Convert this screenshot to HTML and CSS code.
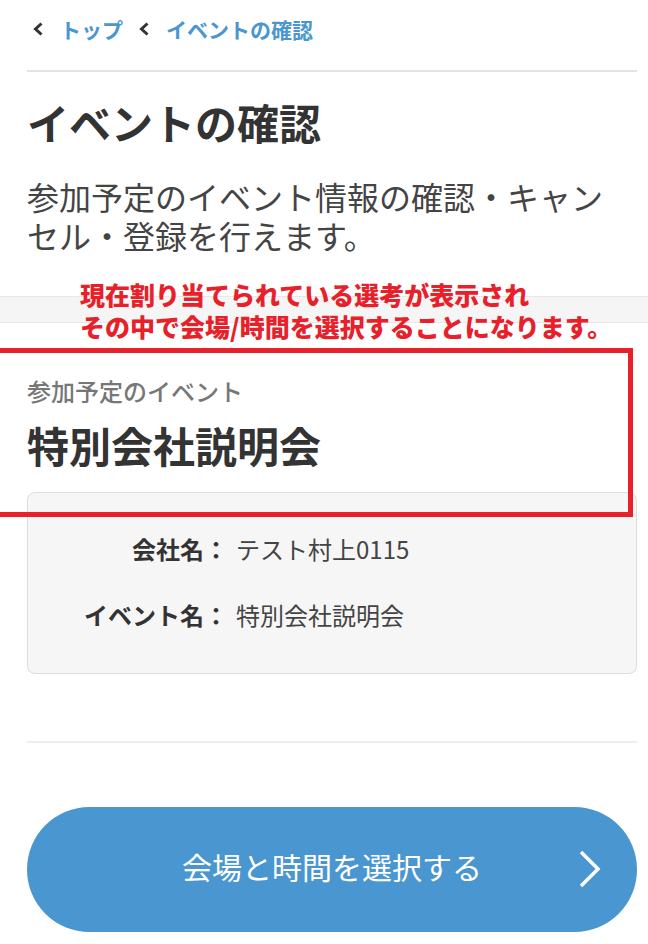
FILE: index.html
```html
<!DOCTYPE html>
<html lang="ja">
<head>
<meta charset="UTF-8">
<meta name="viewport" content="width=device-width, initial-scale=1.0">
<title>イベントの確認</title>
<link rel="stylesheet" href="styles.css">
</head>
<body>

<div class="page">
    <nav class="breadcrumb">
        <span class="crumb">
            <svg class="crumb-arrow" width="11" height="14" viewBox="0 0 11 14"><path d="M8.5 1.5 L2.5 7 L8.5 12.5" fill="none" stroke="#333" stroke-width="3"/></svg>
            <a href="#">トップ</a>
        </span>
        <span class="crumb">
            <svg class="crumb-arrow" width="11" height="14" viewBox="0 0 11 14"><path d="M8.5 1.5 L2.5 7 L8.5 12.5" fill="none" stroke="#333" stroke-width="3"/></svg>
            <a href="#">イベントの確認</a>
        </span>
    </nav>

    <h1 class="page-title">イベントの確認</h1>
    <p class="page-desc">参加予定のイベント情報の確認・キャンセル・登録を行えます。</p>
</div>

<div class="band"></div>

<div class="page">
    <p class="section-label">参加予定のイベント</p>
    <h2 class="event-title">特別会社説明会</h2>

    <div class="info-card">
        <span class="info-label">会社名：</span>
        <span class="info-value">テスト村上0115</span>
        <span class="info-label">イベント名：</span>
        <span class="info-value">特別会社説明会</span>
    </div>

    <hr class="divider">

    <button class="select-button">
        会場と時間を選択する
        <svg class="select-arrow" width="24" height="38" viewBox="0 0 24 38"><path d="M3 2 L20 19 L3 36" fill="none" stroke="#fff" stroke-width="3.5"/></svg>
    </button>
</div>

<!-- 注釈 -->
<div class="note">現在割り当てられている選考が表示され<br>その中で会場/時間を選択することになります。</div>
<div class="note-frame"></div>

</body>
</html>
```

FILE: styles.css
```css
body {
    margin: 0;
    padding: 0;
    font-family: "Noto Sans CJK JP", "Noto Sans", sans-serif;
    color: #333;
    background-color: #fff;
    position: relative;
}
.page {
    padding: 0 11px 0 27px;
}
.breadcrumb {
    display: flex;
    align-items: center;
    gap: 16px;
    height: 58px;
    padding-bottom: 12px;
    border-bottom: 2px solid #e3e3e3;
    padding-left: 6px;
    margin-bottom: 25px;
}
.crumb {
    display: flex;
    align-items: center;
    gap: 16px;
}
.crumb a {
    color: #4a96d0;
    text-decoration: none;
    font-size: 21px;
    font-weight: bold;
}
.page-title {
    margin: 10px 0 0;
    font-size: 42px;
    line-height: 50px;
    font-weight: bold;
}
.page-desc {
    margin: 30px 0 0;
    padding-right: 20px;
    font-size: 32px;
    line-height: 39px;
    color: #444;
}
.band {
    margin-top: 41px;
    height: 25px;
    background-color: #f5f5f5;
    border-top: 1px solid #e8e8e8;
    border-bottom: 1px solid #e8e8e8;
}
.section-label {
    margin: 52px 0 0;
    font-size: 24px;
    line-height: 32px;
    font-weight: 500;
    color: #777;
}
.event-title {
    margin: 13px 0 0;
    font-size: 42px;
    line-height: 50px;
    font-weight: bold;
}
.info-card {
    margin-top: 22px;
    background-color: #f6f6f6;
    border: 1px solid #dedede;
    border-radius: 8px;
    padding: 40px 20px 42px 56px;
    display: grid;
    grid-template-columns: auto 1fr;
    column-gap: 8px;
    row-gap: 34px;
    font-size: 24px;
    line-height: 32px;
}
.info-label {
    text-align: right;
    font-weight: bold;
}
.info-value {
    color: #444;
}
.divider {
    margin: 67px 0 0;
    border: none;
    border-top: 2px solid #eee;
}
.select-button {
    margin-top: 64px;
    width: 100%;
    height: 125px;
    padding-bottom: 8px;
    border: none;
    border-radius: 63px;
    background-color: #4a96d0;
    color: #fff;
    font-family: inherit;
    font-size: 30px;
    position: relative;
    cursor: pointer;
}
.select-arrow {
    position: absolute;
    right: 35px;
    top: 43px;
}
.note {
    position: absolute;
    left: 80px;
    top: 278px;
    color: #e8202a;
    font-size: 25px;
    line-height: 32px;
    font-weight: 900;
    white-space: nowrap;
}
.note-frame {
    position: absolute;
    left: -10px;
    top: 348px;
    width: 638px;
    height: 159px;
    border: 5px solid #e8202a;
    border-left: none;
}
```
